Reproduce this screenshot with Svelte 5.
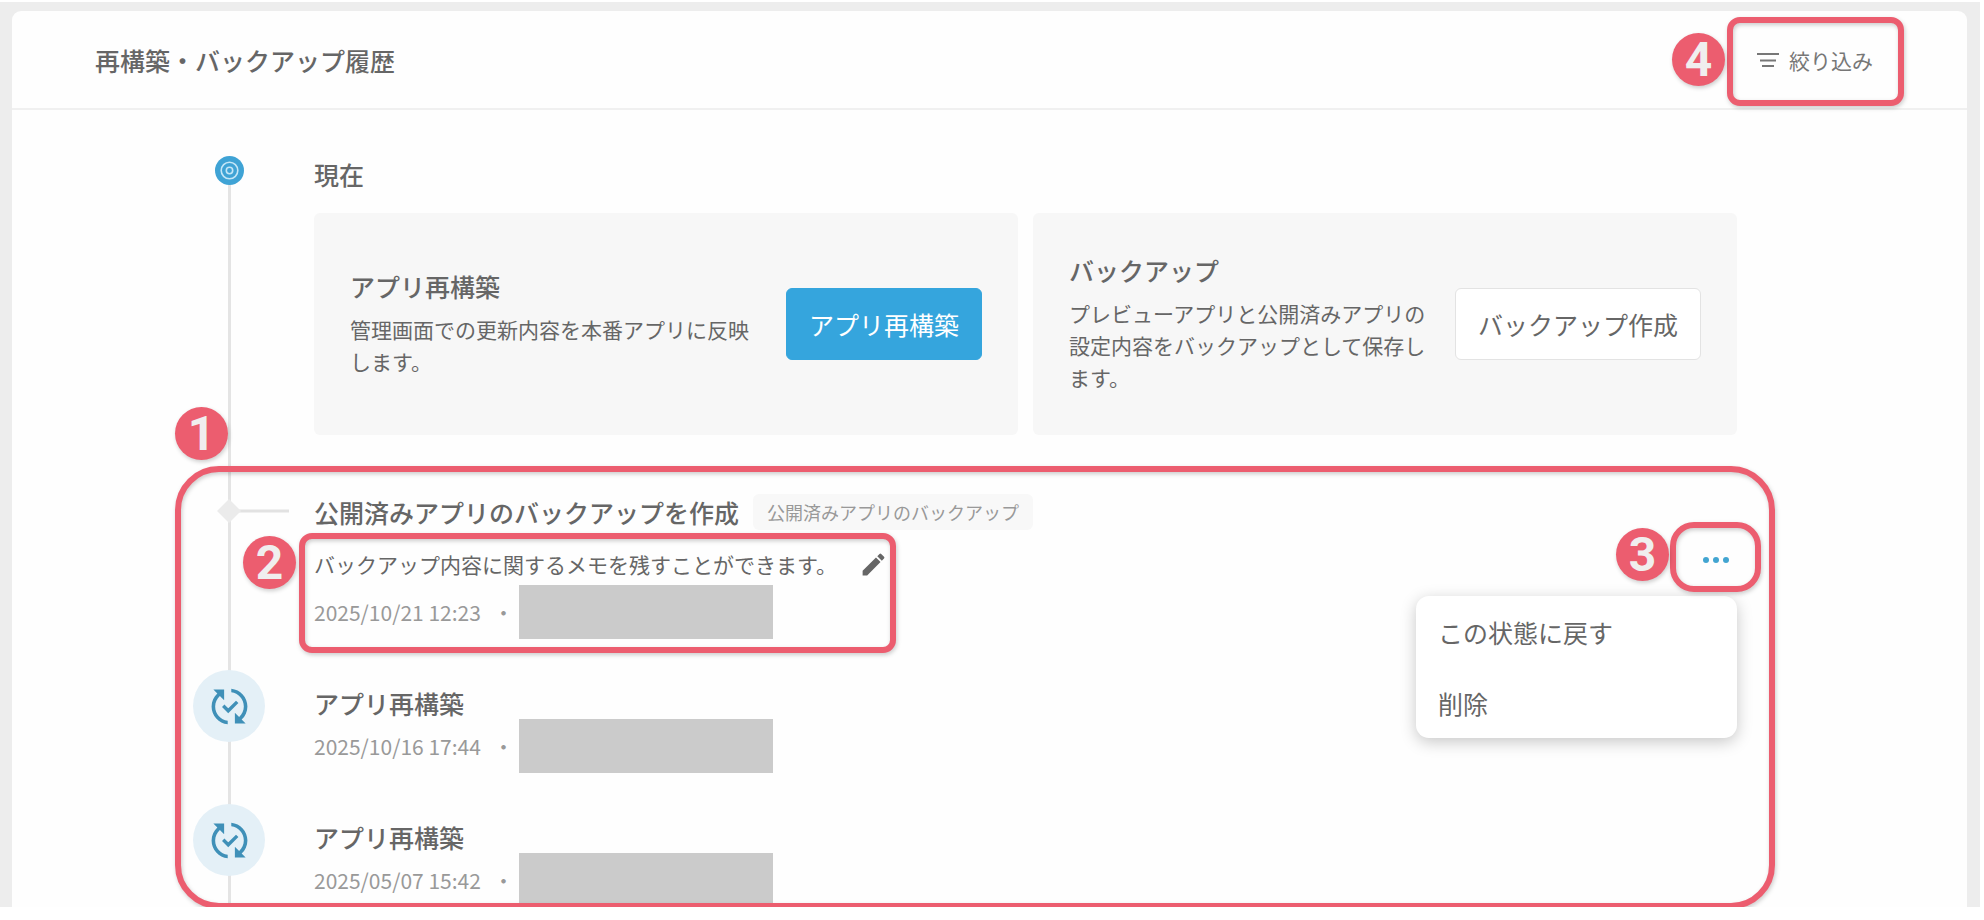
<script lang="ts">
  interface HistoryEntry {
    title: string;
    date: string;
  }

  const rebuilds: HistoryEntry[] = [
    { title: 'アプリ再構築', date: '2025/10/16 17:44' },
    { title: 'アプリ再構築', date: '2025/05/07 15:42' },
  ];

  let menuOpen = $state(true);
</script>

{#snippet meta(date: string)}
  <div class="meta">
    <time>{date}</time>
    <span class="sep">・</span>
    <span class="redacted"></span>
  </div>
{/snippet}

<div class="frame">
  <main class="panel">
    <header>
      <h1>再構築・バックアップ履歴</h1>
      <div class="filter-wrap">
        <button class="plain filter">
          <svg width="22" height="14" viewBox="0 0 22 14" aria-hidden="true">
            <path d="M0 1h22M3 7.5h16M5 13h12" stroke="currentColor" stroke-width="2" />
          </svg>
          絞り込み
        </button>
        <span class="callout callout-filter"></span>
        <span class="badge badge-filter">4</span>
      </div>
    </header>

    <div class="timeline">
      <section class="entry">
        <svg class="dot" width="29" height="29" viewBox="0 0 29 29" aria-hidden="true">
          <circle cx="14.5" cy="14.5" r="14.5" fill="#3fa3d5" />
          <g fill="none" stroke="#c4e6f7" stroke-width="1.6">
            <circle cx="14.5" cy="14.5" r="8.3" />
            <circle cx="14.5" cy="14.5" r="3.2" />
          </g>
        </svg>
        <div class="content">
          <h2>現在</h2>
          <div class="cards">
            <div class="card">
              <div class="card-text">
                <h3>アプリ再構築</h3>
                <p>管理画面での更新内容を本番アプリに反映します。</p>
              </div>
              <button class="btn primary">アプリ再構築</button>
            </div>
            <div class="card">
              <div class="card-text">
                <h3>バックアップ</h3>
                <p>プレビューアプリと公開済みアプリの設定内容をバックアップとして保存します。</p>
              </div>
              <button class="btn">バックアップ作成</button>
            </div>
          </div>
        </div>
      </section>

      <div class="history">
        <section class="entry">
          <svg class="diamond" width="74" height="36" viewBox="0 0 74 36" aria-hidden="true">
            <path d="M37 15.5h60v3H37z" fill="#e2e2e2" />
            <path d="M37 5l12 12-12 12-12-12z" fill="#ebebeb" />
          </svg>
          <div class="content backup">
            <div class="backup-body">
              <div class="title-row">
                <h3>公開済みアプリのバックアップを作成</h3>
                <span class="tag">公開済みアプリのバックアップ</span>
              </div>
              <div class="note">
                <div class="memo">
                  <p>バックアップ内容に関するメモを残すことができます。</p>
                  <button class="plain" aria-label="メモを編集">
                    <svg width="29" height="29" viewBox="0 0 24 24" aria-hidden="true">
                      <path
                        fill="#666"
                        d="M3 17.25V21h3.75L17.81 9.94l-3.75-3.75L3 17.25zM20.71 7.04a1 1 0 0 0 0-1.41l-2.34-2.34a1 1 0 0 0-1.41 0l-1.83 1.83 3.75 3.75 1.83-1.83z"
                      />
                    </svg>
                  </button>
                </div>
                {@render meta('2025/10/21 12:23')}
                <span class="callout callout-note"></span>
                <span class="badge badge-note">2</span>
              </div>
            </div>
            <div class="actions">
              <button
                class="plain more"
                aria-label="メニュー"
                aria-expanded={menuOpen}
                onclick={() => (menuOpen = !menuOpen)}
              >
                <svg width="26" height="6" viewBox="0 0 26 6" fill="#42a5d1" aria-hidden="true">
                  <circle cx="3" cy="3" r="3" />
                  <circle cx="13" cy="3" r="3" />
                  <circle cx="23" cy="3" r="3" />
                </svg>
              </button>
              {#if menuOpen}
                <div class="menu">
                  <button class="plain">この状態に戻す</button>
                  <button class="plain">削除</button>
                </div>
              {/if}
              <span class="callout callout-more"></span>
              <span class="badge badge-more">3</span>
            </div>
          </div>
        </section>

        {#each rebuilds as entry}
          <section class="entry">
            <span class="rebuild-icon">
              <svg width="43" height="43" viewBox="0 0 24 24" aria-hidden="true">
                <path
                  fill="#3f90b8"
                  d="M4 12c0-2.33 1.02-4.42 2.62-5.88L9 8.5v-6H3l2.2 2.2C3.24 6.52 2 9.11 2 12c0 5.19 3.95 9.45 9 9.95v-2.02c-3.94-.49-7-3.86-7-7.93zm18 0c0-5.19-3.95-9.45-9-9.95v2.02c3.94.49 7 3.86 7 7.93 0 2.33-1.02 4.42-2.62 5.88L15 15.5v6h6l-2.2-2.2c1.96-1.82 3.2-4.41 3.2-7.3z"
                />
                <path d="M8.5 11.6l2.8 2.8 5-5" fill="none" stroke="#3f90b8" stroke-width="1.9" />
              </svg>
            </span>
            <div class="content">
              <h3>{entry.title}</h3>
              {@render meta(entry.date)}
            </div>
          </section>
        {/each}

        <span class="callout callout-history"></span>
        <span class="badge badge-history">1</span>
      </div>
    </div>
  </main>
</div>

<style>
  :global(body) {
    background: #fff;
  }

  .frame {
    margin: 2px 4px 0 0;
    padding: 9px 13px 0 12px;
    background: #ededed;
    color: #666;
    font-family: 'Noto Sans CJK JP', 'Noto Sans', sans-serif;
    font-size: 21px;
    line-height: 32px;
  }

  .panel {
    background: #fefefe;
    border-radius: 9px 9px 0 0;
  }

  h1,
  h2,
  h3,
  p {
    margin: 0;
  }

  h1,
  h2,
  h3 {
    font-size: 25px;
    font-weight: 500;
    line-height: 30px;
  }

  button {
    font: inherit;
    color: inherit;
    cursor: pointer;
  }

  .plain {
    display: flex;
    align-items: center;
    padding: 0;
    border: 0;
    background: none;
  }

  header {
    display: flex;
    align-items: center;
    justify-content: space-between;
    height: 97px;
    padding: 0 94px 0 83px;
    border-bottom: 2px solid #f0f0f0;
  }

  .filter-wrap {
    position: relative;
  }

  .filter {
    gap: 10px;
    color: #777;
  }

  .timeline {
    position: relative;
    padding: 46px 230px 0 180px;
  }

  /* vertical rail behind the markers */
  .timeline::before {
    content: '';
    position: absolute;
    top: 60px;
    bottom: 0;
    left: 216px;
    width: 3px;
    background: #e4e4e4;
  }

  .entry {
    position: relative;
    display: grid;
    grid-template-columns: 74px 1fr;
    column-gap: 48px;
    align-items: start;
    justify-items: center;
  }

  .content {
    width: 100%;
  }

  h2 {
    margin-bottom: 21px;
    line-height: 36px;
  }

  .cards {
    display: grid;
    grid-template-columns: 1fr 1fr;
    gap: 15px;
  }

  .card {
    display: flex;
    align-items: center;
    justify-content: space-between;
    gap: 24px;
    box-sizing: border-box;
    min-height: 222px;
    padding: 36px;
    border-radius: 6px;
    background: #f7f7f7;
  }

  .card-text {
    display: grid;
    gap: 12px;
  }

  .btn {
    flex: none;
    height: 72px;
    padding: 0 22px;
    border: 1px solid #e3e3e3;
    border-radius: 6px;
    background: #fff;
    font-size: 25px;
  }

  .btn.primary {
    border-color: #35a5dd;
    background: #35a5dd;
    color: #fff;
  }

  .history {
    position: relative;
    display: grid;
    gap: 49px;
    margin-top: 59px;
  }

  .diamond {
    overflow: visible;
  }

  .backup {
    display: flex;
    align-items: flex-start;
    justify-content: space-between;
  }

  .title-row {
    display: flex;
    align-items: center;
    gap: 14px;
    margin-bottom: 18px;
  }

  .tag {
    padding: 0 14px;
    border-radius: 6px;
    background: #f8f8f8;
    color: #999;
    font-size: 18px;
    line-height: 36px;
  }

  .note {
    position: relative;
    display: grid;
    gap: 5px;
    width: fit-content;
  }

  .memo {
    display: flex;
    align-items: center;
    gap: 22px;
    height: 32px;
  }

  .meta {
    display: flex;
    align-items: center;
    color: #999;
  }

  .sep {
    margin: 0 5px 0 12px;
  }

  .redacted {
    width: 254px;
    height: 54px;
    background: #cbcbcb;
  }

  .entry h3 + .meta {
    margin-top: 1px;
  }

  .rebuild-icon {
    display: flex;
    align-items: center;
    justify-content: center;
    width: 72px;
    height: 72px;
    margin-top: -18px;
    border-radius: 50%;
    background: #e4f0f7;
  }

  .actions {
    position: relative;
    margin-top: 43px;
  }

  .more {
    justify-content: center;
    width: 42px;
    height: 46px;
  }

  .menu {
    position: absolute;
    top: 59px;
    right: 0;
    width: 321px;
    border-radius: 13px;
    background: #fff;
    box-shadow: 0 4px 16px rgba(0, 0, 0, 0.22);
  }

  .menu button {
    width: 100%;
    height: 71px;
    padding: 0 22px;
    font-size: 25px;
  }

  /* numbered callouts laid over the controls they explain */
  .callout {
    position: absolute;
    border: 6px solid #ec5d6f;
    border-radius: 13px;
    filter: drop-shadow(1px 2px 2px rgba(0, 0, 0, 0.2));
    pointer-events: none;
  }

  .badge {
    position: absolute;
    width: 53px;
    height: 53px;
    border-radius: 50%;
    background: #ec5d6f;
    box-shadow: 1px 2px 4px rgba(0, 0, 0, 0.2);
    color: #f0eeee;
    font-family: Roboto, 'Noto Sans', sans-serif;
    font-size: 48px;
    font-weight: 700;
    line-height: 53px;
    text-align: center;
  }

  .callout-filter {
    inset: -27px -31px -30px -30px;
  }

  .badge-filter {
    top: -11px;
    left: -85px;
  }

  .callout-note {
    inset: -15px -8px -14px -15px;
  }

  .badge-note {
    top: -12px;
    left: -71px;
  }

  .callout-more {
    inset: -15px -24px -9px -25px;
    border-radius: 24px;
  }

  .badge-more {
    top: -9px;
    left: -79px;
  }

  .callout-history {
    inset: -28px -38px -2px -17px;
    border-radius: 44px;
  }

  .badge-history {
    top: -87px;
    left: -17px;
  }
</style>
